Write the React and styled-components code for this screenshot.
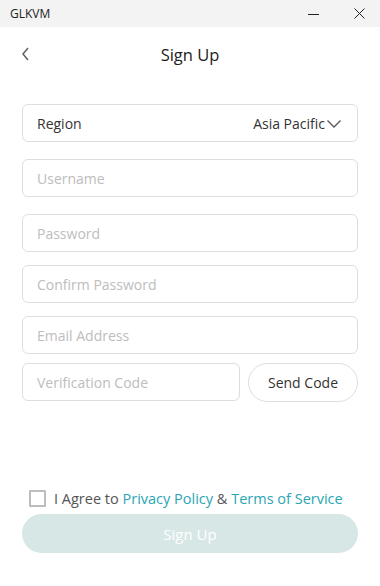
import React from "react";
import styled, { createGlobalStyle } from "styled-components";

const Global = createGlobalStyle`
  html, body { margin: 0; padding: 0; background: #fff; }
  body { font-family: "Open Sans", "Noto Sans", sans-serif; color: #333; }
  * { box-sizing: border-box; }
`;

const Page = styled.div`
  height: 586px;
  display: flex;
  flex-direction: column;
  background: #fff;
`;

const TitleBar = styled.div`
  height: 27px;
  background: #f3f3f3;
  display: flex;
  align-items: center;
  padding-left: 10px;
  font-size: 12px;
  color: #222;
`;

const AppName = styled.span`
  flex: 1;
`;

const WinButton = styled.div`
  width: ${p => p.$w}px;
  height: 27px;
  display: flex;
  align-items: center;
  justify-content: center;
`;

const Header = styled.div`
  height: 54px;
  position: relative;
  display: flex;
  align-items: center;
  justify-content: center;
`;

const Back = styled.div`
  position: absolute;
  left: 20px;
  top: 19px;
  width: 12px;
  height: 16px;
  display: flex;
`;

const Title = styled.h1`
  margin: 0;
  font-size: 16.5px;
  font-weight: 400;
  color: #222;
`;

const Form = styled.div`
  display: flex;
  flex-direction: column;
  padding: 0 22px;
  flex: 1;
`;

const Field = styled.div`
  height: 38px;
  margin-top: ${p => p.$mt || 0}px;
  border: 1px solid #dedede;
  border-radius: 6px;
  display: flex;
  align-items: center;
  padding: 1px 15px 0 14px;
  font-size: 14px;
  color: ${p => (p.$filled ? "#333" : "#bdbdbd")};
  flex: ${p => (p.$grow ? 1 : "none")};
`;

const FieldLabel = styled.span`
  flex: 1;
`;

const Select = styled.span`
  display: flex;
  align-items: center;
  gap: 1px;
  color: #333;
`;

const Row = styled.div`
  display: flex;
  gap: 8px;
  margin-top: ${p => p.$mt || 0}px;
`;

const SendBtn = styled.div`
  width: 110px;
  height: 39px;
  border: 1px solid #dedede;
  border-radius: 20px;
  display: flex;
  align-items: center;
  justify-content: center;
  font-size: 14px;
  color: #333;
`;

const Spacer = styled.div`
  flex: 1;
`;

const Agree = styled.div`
  display: flex;
  align-items: center;
  gap: 8px;
  padding-left: 7px;
  font-size: 14.5px;
  color: #555;
  height: 17px;
  margin-top: 1px;
`;

const Box = styled.span`
  width: 17px;
  height: 17px;
  border: 2px solid #bdbdbd;
  border-radius: 1px;
`;

const Link = styled.span`
  color: #2aa6b3;
`;

const Submit = styled.div`
  height: 39px;
  margin: 7px 0 33px;
  border-radius: 20px;
  background: #d7e7e6;
  color: #fff;
  font-size: 15px;
  display: flex;
  align-items: center;
  justify-content: center;
`;

export default function App() {
  return (
    <Page>
      <Global />
      <TitleBar>
        <AppName>GLKVM</AppName>
        <WinButton $w={50}>
          <svg width="11" height="10" viewBox="0 0 11 10">
            <line x1="0" y1="5.5" x2="11" y2="5.5" stroke="#222" strokeWidth="1" />
          </svg>
        </WinButton>
        <WinButton $w={42}>
          <svg width="11" height="11" viewBox="0 0 11 11">
            <path d="M0.5 0.5L10.5 10.5M10.5 0.5L0.5 10.5" stroke="#222" strokeWidth="1" />
          </svg>
        </WinButton>
      </TitleBar>
      <Header>
        <Back>
          <svg width="12" height="16" viewBox="0 0 12 16">
            <path d="M8 2L3 8L8 14" fill="none" stroke="#666" strokeWidth="1.6" />
          </svg>
        </Back>
        <Title>Sign Up</Title>
      </Header>
      <Form>
        <Field $mt={23} $filled>
          <FieldLabel>Region</FieldLabel>
          <Select>
            Asia Pacific
            <svg width="16" height="10" viewBox="0 0 16 10">
              <path d="M1.5 1.5L8 8L14.5 1.5" fill="none" stroke="#555" strokeWidth="1.3" />
            </svg>
          </Select>
        </Field>
        <Field $mt={17}>Username</Field>
        <Field $mt={17}>Password</Field>
        <Field $mt={13}>Confirm Password</Field>
        <Field $mt={13}>Email Address</Field>
        <Row $mt={9}>
          <Field $grow>Verification Code</Field>
          <SendBtn>Send Code</SendBtn>
        </Row>
        <Spacer />
        <Agree>
          <Box />
          <span>
            I Agree to <Link>Privacy Policy</Link> &amp; <Link>Terms of Service</Link>
          </span>
        </Agree>
        <Submit>Sign Up</Submit>
      </Form>
    </Page>
  );
}
